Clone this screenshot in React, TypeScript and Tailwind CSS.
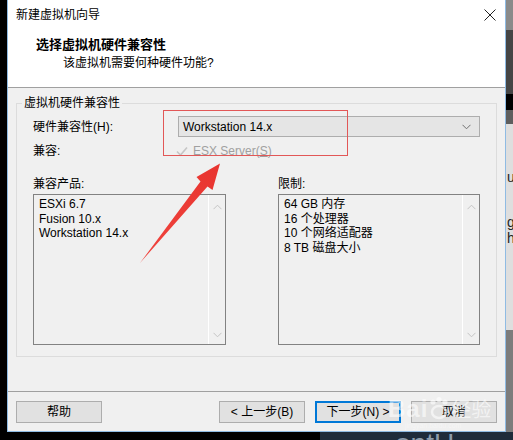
import React from "react";

const Chevron = ({ dir, className }: { dir: "up" | "down"; className?: string }) => (
  <svg width="9" height="6" viewBox="0 0 9 6" className={className}>
    {dir === "down" ? (
      <path d="M0.5 0.8 L4.5 4.8 L8.5 0.8" fill="none" stroke="currentColor" strokeWidth="1" />
    ) : (
      <path d="M0.5 5.2 L4.5 1.2 L8.5 5.2" fill="none" stroke="currentColor" strokeWidth="1" />
    )}
  </svg>
);

const ListBox = ({ items, width }: { items: string[]; width: string }) => (
  <div className={`${width} h-[151px] border border-[#828282] bg-[#f0f0f0] flex`}>
    <div className="flex-1 pl-[5px] pt-[2px] text-[12px] leading-[14.5px] text-black">
      {items.map((t) => (
        <div key={t}>{t}</div>
      ))}
    </div>
    <div className="w-[17px] border-l border-white flex flex-col items-center justify-between pt-[9px] pb-[6px] text-[#c4c4c4]">
      <Chevron dir="up" />
      <Chevron dir="down" />
    </div>
  </div>
);

const Btn = ({ label, focused }: { label: React.ReactNode; focused?: boolean }) => (
  <div
    className={`w-[86px] h-[22px] flex items-center justify-center text-[12px] text-black bg-[#e1e1e1] ${
      focused ? "border-2 border-[#0078d7]" : "border border-[#adadad]"
    }`}
  >
    {label}
  </div>
);

export default function App() {
  return (
    <div className="w-[513px] h-[440px] bg-black flex flex-col overflow-hidden font-['Liberation_Sans','Noto_Sans_CJK_SC',sans-serif] relative">
      <div className="flex h-[432px]">
        <div className="w-[7px] bg-black" />
        {/* wizard window */}
        <div className="w-[499px] h-[432px] flex flex-col border-l border-r border-b border-[#8fbbe3] bg-white">
          {/* title bar */}
          <div className="h-[30px] flex items-center justify-between pl-[8px] pr-[9px] text-[12px] text-black">
            <span>新建虚拟机向导</span>
            <svg width="12" height="12" viewBox="0 0 12 12">
              <path d="M0.5 0.5 L11.5 11.5 M11.5 0.5 L0.5 11.5" stroke="#222" strokeWidth="1" />
            </svg>
          </div>
          {/* header */}
          <div className="h-[57px] pt-[6px] pl-[28px] text-black">
            <div className="text-[13px] leading-[18px] font-bold">选择虚拟机硬件兼容性</div>
            <div className="text-[12px] leading-[18px] pl-[27px]">该虚拟机需要何种硬件功能?</div>
          </div>
          <div className="h-px bg-[#a0a0a0]" />
          {/* body */}
          <div className="flex-1 bg-[#f0f0f0] flex flex-col">
            <div className="relative ml-[8px] mt-[15px] w-[481px] h-[254px] border border-[#dcdcdc] pt-[12px] pl-[16px] text-[12px] text-black">
              <span className="absolute -top-[8px] left-[5px] px-[2px] leading-[14px] bg-[#f0f0f0]">虚拟机硬件兼容性</span>
              <div className="flex items-center h-[21px]">
                <div className="w-[145px]">硬件兼容性(H):</div>
                <div className="w-[302px] h-[21px] border border-[#adadad] bg-[#e5e5e5] flex items-center justify-between pl-[4px] pr-[8px]">
                  <span>Workstation 14.x</span>
                  <Chevron dir="down" className="text-[#707070]" />
                </div>
              </div>
              <div className="flex items-center h-[20px] mt-[4px]">
                <div className="w-[142px]">兼容:</div>
                <div className="w-[13px] h-[13px] flex items-center justify-center">
                  <svg width="12" height="11" viewBox="0 0 12 11">
                    <path d="M1 5.5 L4.5 9 L11 1.5" fill="none" stroke="#c6c6c6" strokeWidth="1.6" />
                  </svg>
                </div>
                <span className="ml-[5px] text-[#a0a0a0]">
                  ESX Server(<span className="underline">S</span>)
                </span>
              </div>
              <div className="flex mt-[16px] leading-[14px]">
                <div className="w-[245px]">兼容产品:</div>
                <div>限制:</div>
              </div>
              <div className="flex mt-[3px] gap-[52px]">
                <ListBox width="w-[193px]" items={["ESXi 6.7", "Fusion 10.x", "Workstation 14.x"]} />
                <ListBox width="w-[202px]" items={["64 GB 内存", "16 个处理器", "10 个网络适配器", "8 TB 磁盘大小"]} />
              </div>
            </div>
          </div>
          <div className="h-px bg-[#a0a0a0]" />
          {/* button bar */}
          <div className="h-[39px] bg-[#f0f0f0] flex pt-[9px] px-[8px]">
            <Btn label="帮助" />
            <div className="flex-1" />
            <div className="flex gap-[10px]">
              <Btn label="< 上一步(B)" />
              <Btn label="下一步(N) >" focused />
              <Btn label="取消" />
            </div>
          </div>
        </div>
        {/* window behind, right edge */}
        <div className="w-[7px] flex flex-col">
          <div className="h-[30px] bg-[#8a8a8a]" />
          <div className="h-[64px] bg-[#454545]" />
          <div className="h-[16px] bg-black" />
          <div className="h-[14px] bg-[#5e5e5e]" />
          <div className="h-[206px] bg-[#dedede] text-[14px] leading-[16px] text-[#222] pl-[1px] pt-[45px] overflow-hidden">
            <div>u</div>
            <div className="mt-[29px]">g</div>
            <div>h</div>
          </div>
          <div className="flex-1 bg-[#7c7c7c]" />
        </div>
      </div>
      {/* desktop strip below the window */}
      <div className="h-[8px] flex overflow-hidden">
        <div className="w-[320px] bg-black" />
        <div className="flex-1 bg-[#1e2b3a] overflow-hidden">
          <div className="ml-[75px] -mt-[2px] text-[28px] leading-[28px] text-[#8d9cab]">ontU</div>
        </div>
      </div>

      {/* annotation: red box */}
      <div className="absolute left-[163px] top-[110px] w-[185px] h-[46px] border border-[#e25757]" />
      {/* annotation: red arrow */}
      <svg className="absolute left-0 top-0" width="513" height="440" viewBox="0 0 513 440">
        <defs>
          <linearGradient id="arrowFill" x1="140" y1="263" x2="220" y2="164" gradientUnits="userSpaceOnUse">
            <stop offset="0" stopColor="#f0453f" />
            <stop offset="1" stopColor="#e8342f" />
          </linearGradient>
        </defs>
        <polygon
          points="140,263 200.5,181.5 196.5,177 220,163.5 212.5,190 207.5,186.5"
          fill="url(#arrowFill)"
        />
      </svg>

      {/* watermark */}
      <div className="absolute left-[388px] top-[396px] flex items-end text-white/60 pointer-events-none">
        <span className="text-[24px] leading-[26px] font-bold tracking-[1px]">Bai</span>
        <svg width="22" height="24" viewBox="0 0 22 24" className="mb-[2px] opacity-60">
          <circle cx="5" cy="6" r="2.6" fill="white" />
          <circle cx="11" cy="3.5" r="2.6" fill="white" />
          <circle cx="17" cy="6" r="2.6" fill="white" />
          <ellipse cx="11" cy="16" rx="7" ry="6" fill="none" stroke="white" strokeWidth="2.5" />
        </svg>
        <span className="text-[20px] leading-[24px] ml-[1px]">经验</span>
      </div>
      <div className="absolute left-[405px] top-[422px] text-[7px] leading-[8px] text-white/40 pointer-events-none">
        jingyan.baidu.com
      </div>
    </div>
  );
}
